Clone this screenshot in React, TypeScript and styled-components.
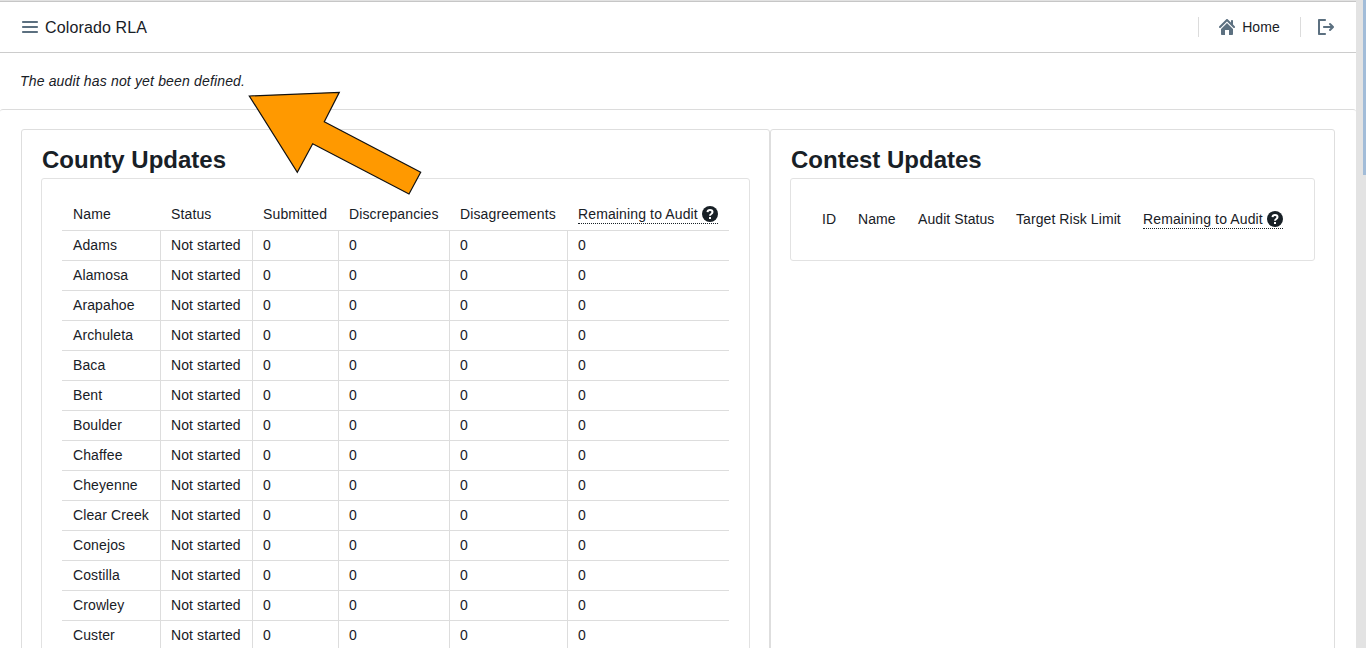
import React from 'react';
import styled, { createGlobalStyle } from 'styled-components';

const Global = createGlobalStyle`
  body { margin: 0; background: #fff; color: #182026; font: 14px/18px "Liberation Sans", Arial, sans-serif; letter-spacing: 0.13px; }
  * { box-sizing: border-box; }
`;

const Page = styled.div`position: relative; width: 1356px;`;
const ScrollTrack = styled.div`
  position: fixed; top: 0; right: 0; bottom: 0; width: 10px; background: #e3e3e3;
`;
const ScrollThumb = styled.div`
  position: absolute; top: 0; right: 0; width: 3px; height: 175px; background: #a2bcd8;
`;
const Nav = styled.header`
  height: 53px; display: flex; align-items: center; justify-content: space-between;
  border-top: 1px solid #e2e2e2; box-shadow: inset 0 1px 0 #c6c6c6;
  border-bottom: 1px solid #cccccc; padding: 1px 22px 0 22px;
`;
const NavGroup = styled.div`display: flex; align-items: center;`;
const Brand = styled.span`font-size: 16px; margin-left: 7px; padding-top: 2px;`;
const IconSvg = styled.svg<{ $gapLeft?: number }>`
  display: block; fill: #5c7080; flex: none; margin-left: ${p => p.$gapLeft ?? 0}px;
`;
const Divider = styled.span`width: 1px; height: 20px; background: #dcdcdc;`;
const HomeLink = styled.span`display: flex; align-items: center; gap: 7px; margin: 0 20px;`;
const Banner = styled.p`margin: 0; padding: 19px 20px; height: 56px; font-style: italic; letter-spacing: 0.16px;`;
const Main = styled.main`
  display: flex; align-items: flex-start; padding: 19px 21px 20px;
  border-top: 1px solid #dcdcdc; border-radius: 3px;
`;
const Panel = styled.section<{ $grow?: boolean }>`
  flex: ${p => (p.$grow ? '1 1 0' : '0 0 auto')}; align-self: stretch;
  border: 1px solid #dedede; border-radius: 3px; padding: 19px;
`;
const Title = styled.h3`margin: 0 0 8px 1px; font-size: 24px; line-height: 21px; font-weight: 700; letter-spacing: 0;`;
const InnerCard = styled.div`border: 1px solid #e2e2e2; border-radius: 3px; padding: 20px;`;
const Table = styled.table<{ $width: number }>`
  border-collapse: separate; border-spacing: 0; table-layout: fixed; width: ${p => p.$width}px;
`;
const Th = styled.th<{ $roomy?: boolean; $w: number }>`
  width: ${p => p.$w}px; text-align: left; font-weight: 400; white-space: nowrap;
  letter-spacing: ${p => (p.$roomy ? '0.08px' : '0.13px')};
  padding: ${p => (p.$roomy ? '11px' : '6px 11px')};
`;
const Td = styled.td`
  height: 30px; padding: 0 11px; white-space: nowrap; border-top: 1px solid #dddddd; letter-spacing: 0.11px;
  & + & { border-left: 1px solid #dddddd; padding-left: 10px; }
`;
const TipText = styled.span`
  display: inline-flex; align-items: center; gap: 4px; height: 18px; letter-spacing: 0.13px;
  border-bottom: 1px dotted #182026;
`;
const HelpIcon = styled.svg`display: block; flex: none;`;
const Arrow = styled.svg`position: absolute; left: 240px; top: 85px; pointer-events: none;`;

const counties = ['Adams','Alamosa','Arapahoe','Archuleta','Baca','Bent','Boulder','Chaffee','Cheyenne','Clear Creek','Conejos','Costilla','Crowley','Custer','Delta','Denver','Dolores','Douglas','Eagle','Elbert','El Paso','Fremont','Garfield','Gilpin','Grand','Gunnison','Hinsdale','Huerfano','Jackson','Jefferson','Kiowa','Kit Carson','Lake','La Plata','Larimer','Las Animas','Lincoln','Logan','Mesa','Mineral','Moffat','Montezuma','Montrose','Morgan','Otero','Ouray','Park','Phillips','Pitkin','Prowers','Pueblo','Rio Blanco','Rio Grande','Routt','Saguache','San Juan','San Miguel','Sedgwick','Summit','Teller','Washington','Weld','Yuma','Broomfield'];

const countyColumns: [string, number][] = [['Name', 98], ['Status', 92], ['Submitted', 86], ['Discrepancies', 111], ['Disagreements', 118]];
const contestColumns: [string, number][] = [['ID', 36], ['Name', 60], ['Audit Status', 98], ['Target Risk Limit', 127]];

const Remaining = () => (
  <TipText>
    Remaining to Audit
    <HelpIcon width="16" height="16" viewBox="0 0 16 16">
      <circle cx="8" cy="8" r="8" fill="#182026" />
      <path d="M5.5 6.1C5.6 4.7 6.6 3.9 8 3.9c1.5 0 2.5.9 2.5 2.1 0 1-.6 1.5-1.3 2-.7.4-1.2.9-1.2 1.8" fill="none" stroke="#fff" strokeWidth="2" />
      <rect x="7" y="11" width="2" height="2" fill="#fff" />
    </HelpIcon>
  </TipText>
);

export default function App() {
  return (
    <Page>
      <Global />
      <Nav>
        <NavGroup>
          <IconSvg width="16" height="16" viewBox="0 0 16 16"><path d="M1 4h14c.55 0 1-.45 1-1s-.45-1-1-1H1c-.55 0-1 .45-1 1s.45 1 1 1zm14 3H1c-.55 0-1 .45-1 1s.45 1 1 1h14c.55 0 1-.45 1-1s-.45-1-1-1zm0 5H1c-.55 0-1 .45-1 1s.45 1 1 1h14c.55 0 1-.45 1-1s-.45-1-1-1z" /></IconSvg>
          <Brand>Colorado RLA</Brand>
        </NavGroup>
        <NavGroup>
          <Divider />
          <HomeLink>
            <IconSvg width="16" height="16" viewBox="0 0 16 16"><path d="M2 10v5c0 .55.45 1 1 1h3v-5h4v5h3c.55 0 1-.45 1-1v-5L8 4l-6 6zm13.71-2.71L14 5.59V2c0-.55-.45-1-1-1s-1 .45-1 1v1.59L8.71.29C8.53.11 8.28 0 8 0s-.53.11-.71.29l-7 7a1.003 1.003 0 001.42 1.42L8 2.41l6.29 6.29c.18.19.43.3.71.3a1.003 1.003 0 00.71-1.71z" /></IconSvg>
            Home
          </HomeLink>
          <Divider />
          <IconSvg $gapLeft={17} width="16" height="16" viewBox="0 0 16 16"><path d="M7 14H2V2h5c.55 0 1-.45 1-1s-.45-1-1-1H1C.45 0 0 .45 0 1v14c0 .55.45 1 1 1h6c.55 0 1-.45 1-1s-.45-1-1-1zm8.71-6.71l-3-3a1.003 1.003 0 00-1.42 1.42L12.59 7H6c-.55 0-1 .45-1 1s.45 1 1 1h6.59l-1.29 1.29c-.19.18-.3.43-.3.71a1.003 1.003 0 001.71.71l3-3c.18-.18.29-.43.29-.71 0-.28-.11-.53-.29-.71z" /></IconSvg>
        </NavGroup>
      </Nav>
      <Banner>The audit has not yet been defined.</Banner>
      <Main>
        <Panel>
          <Title>County Updates</Title>
          <InnerCard>
            <Table $width={667}>
              <thead>
                <tr>
                  {countyColumns.map(([h, w]) => <Th $w={w} key={h}>{h}</Th>)}
                  <Th $w={162}><Remaining /></Th>
                </tr>
              </thead>
              <tbody>
                {counties.map(c => (
                  <tr key={c}>
                    <Td>{c}</Td><Td>Not started</Td><Td>0</Td><Td>0</Td><Td>0</Td><Td>0</Td>
                  </tr>
                ))}
              </tbody>
            </Table>
          </InnerCard>
        </Panel>
        <Panel $grow>
          <Title>Contest Updates</Title>
          <InnerCard>
            <Table $width={483}>
              <thead>
                <tr>
                  {contestColumns.map(([h, w]) => <Th $roomy $w={w} key={h}>{h}</Th>)}
                  <Th $roomy $w={162}><Remaining /></Th>
                </tr>
              </thead>
            </Table>
          </InnerCard>
        </Panel>
      </Main>
      <Arrow width="190" height="115" viewBox="240 85 190 115">
        <polygon points="249.3,96 339.3,92.3 324.3,121.7 420.7,172.3 409,194 312.7,143.7 297.3,172.3" fill="#ff9900" stroke="#111" strokeWidth="1.2" />
      </Arrow>
      <ScrollTrack><ScrollThumb /></ScrollTrack>
    </Page>
  );
}
